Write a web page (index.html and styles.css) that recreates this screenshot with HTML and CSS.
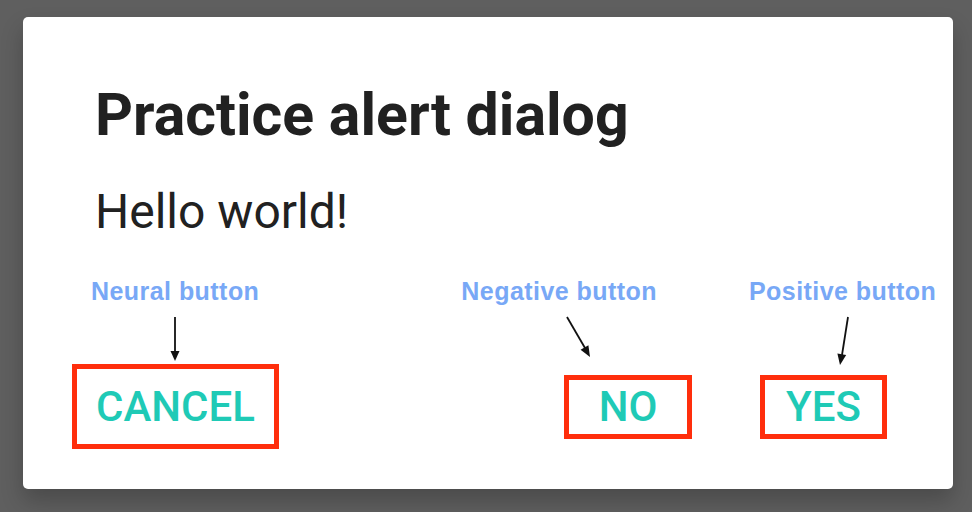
FILE: index.html
```html
<!DOCTYPE html>
<html lang="en">
<head>
<meta charset="utf-8">
<title>Practice alert dialog</title>
<link rel="stylesheet" href="styles.css">
</head>
<body>
<div class="dialog">
  <h1 class="title">Practice alert dialog</h1>
  <p class="message">Hello world!</p>
  <div class="notes">
    <span class="note note-neutral">Neural button</span>
    <span class="note note-negative">Negative button</span>
    <span class="note note-positive">Positive button</span>
  </div>
  <div class="actions">
    <button class="btn btn-cancel">CANCEL</button>
    <span class="spacer"></span>
    <button class="btn btn-no">NO</button>
    <button class="btn btn-yes">YES</button>
  </div>
</div>
<svg class="arrows" width="972" height="512" viewBox="0 0 972 512" aria-hidden="true">
  <g stroke="#111" stroke-width="1.8" fill="none">
    <line x1="175" y1="317" x2="175" y2="352"/>
    <line x1="567" y1="317" x2="585" y2="348"/>
    <line x1="848" y1="317" x2="842" y2="355"/>
  </g>
  <g fill="#111">
    <polygon points="170.5,351 179.5,351 175,361"/>
    <polygon points="580.6,349.8 588.4,345.2 590,357"/>
    <polygon points="837.4,353.5 846.2,354.9 840,365"/>
  </g>
</svg>
</body>
</html>
```
FILE: styles.css
```css
html, body {
  margin: 0;
  padding: 0;
}
body {
  width: 972px;
  height: 512px;
  background: #5f5f5f;
  position: relative;
  overflow: hidden;
  font-family: Roboto, "Noto Sans", sans-serif;
}
.dialog {
  box-sizing: border-box;
  margin: 17px 0 0 23px;
  width: 930px;
  height: 472px;
  background: #ffffff;
  border-radius: 5px;
  padding-top: 68px;
  box-shadow: 0 12px 22px rgba(0, 0, 0, 0.22);
}
.title {
  margin: 0;
  padding-left: 72px;
  font-size: 59px;
  font-weight: 700;
  line-height: 1;
  color: #212121;
}
.message {
  margin: 44px 0 0;
  padding-left: 72px;
  font-size: 48px;
  font-weight: 400;
  line-height: 1;
  color: #212121;
}
.notes {
  display: flex;
  margin-top: 43px;
  padding-left: 68px;
  font-family: "Liberation Sans", Arial, sans-serif;
  font-weight: 700;
  font-size: 25px;
  letter-spacing: 0.45px;
  line-height: 1;
  color: #78a8f6;
}
.note-negative {
  margin-left: 202px;
}
.note-positive {
  margin-left: 92px;
}
.actions {
  display: flex;
  align-items: center;
  margin-top: 60px;
  padding: 0 66px 0 49px;
}
.spacer {
  flex: 1;
}
.btn {
  box-sizing: border-box;
  margin: 0;
  background: transparent;
  border: 5px solid #ff2e0c;
  font-family: Roboto, "Noto Sans", sans-serif;
  font-weight: 500;
  font-size: 42px;
  line-height: 42px;
  color: #1fcab6;
  text-align: center;
}
.btn-cancel {
  width: 207px;
  height: 85px;
  padding: 0;
}
.btn-no {
  width: 128px;
  height: 64px;
  padding: 0;
}
.btn-yes {
  width: 127px;
  height: 64px;
  padding: 0;
  margin-left: 68px;
}
.arrows {
  position: absolute;
  left: 0;
  top: 0;
  pointer-events: none;
}
```
